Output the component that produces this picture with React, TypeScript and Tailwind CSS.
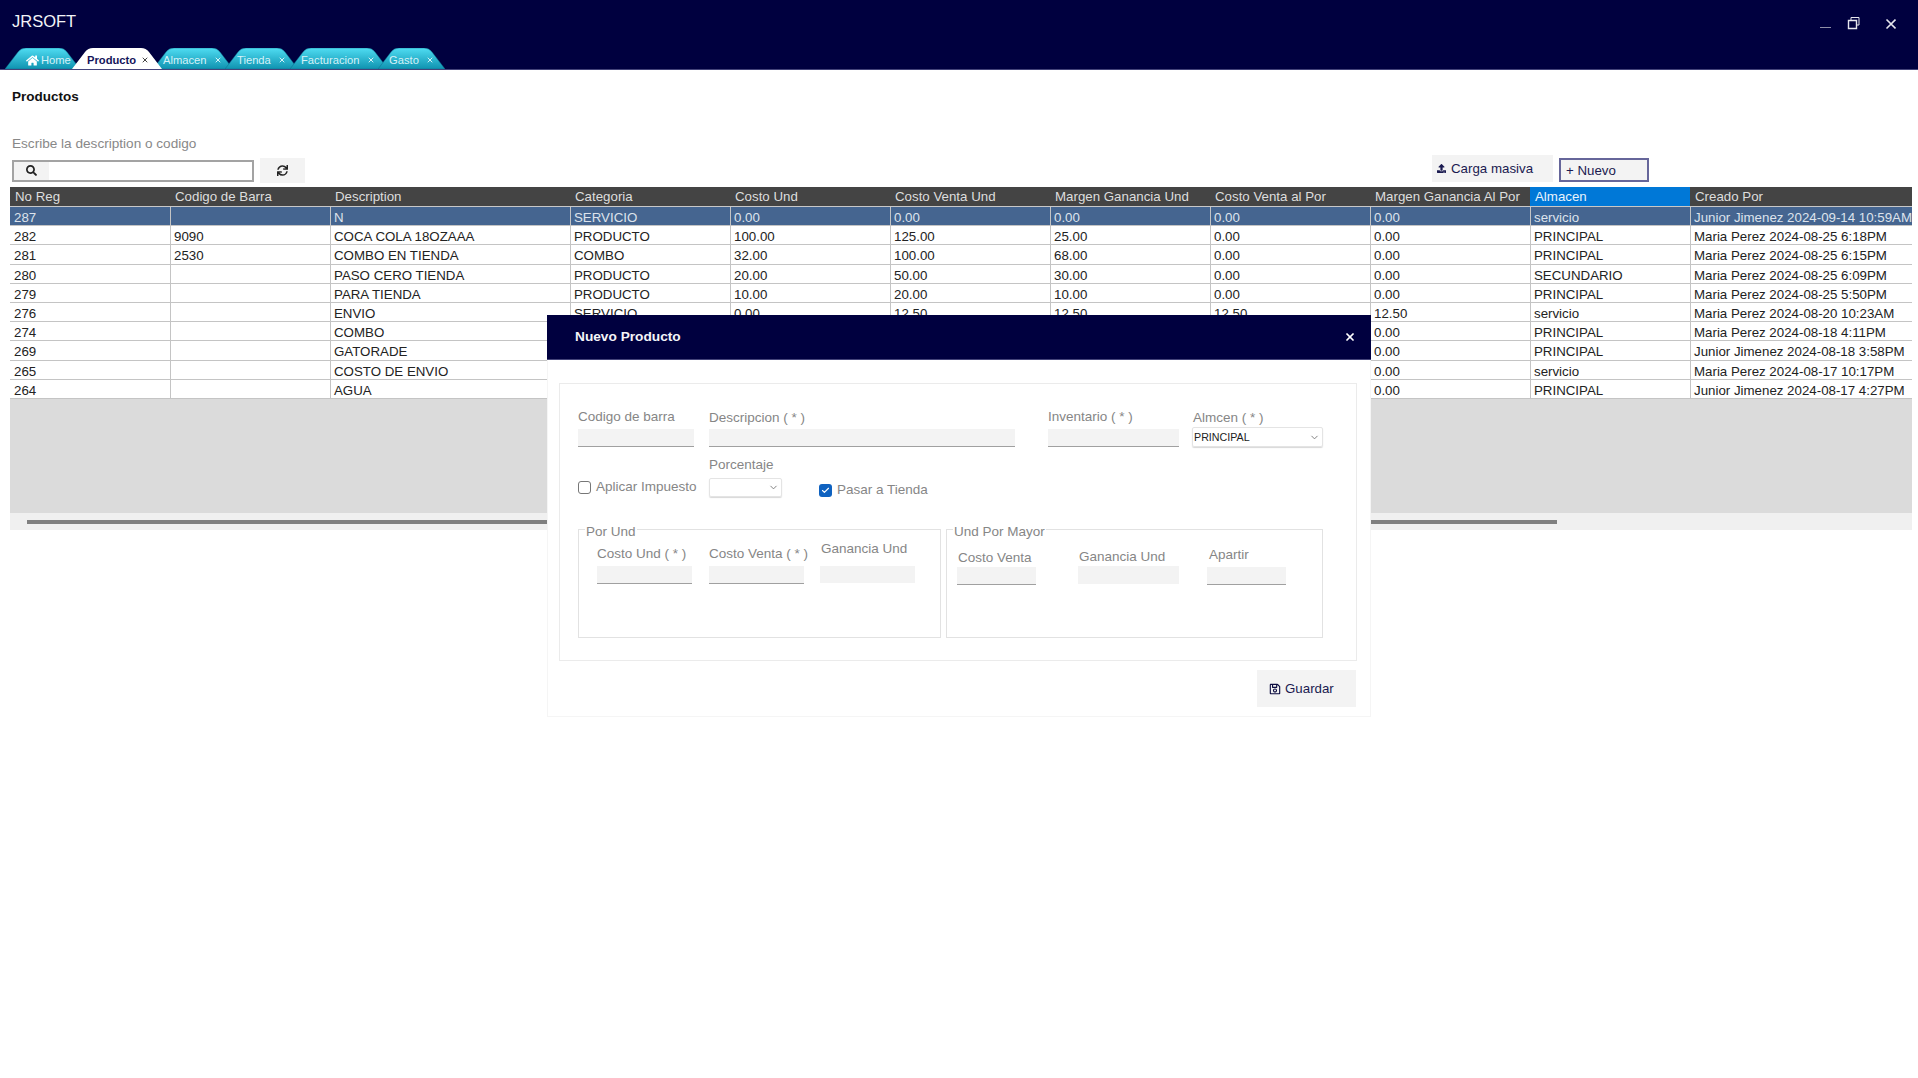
import { useId } from 'react'
import { ChevronDown, Check, X } from 'lucide-react'
import { FaHome, FaRegSave, FaSearch, FaSync, FaUpload } from 'react-icons/fa'

const tabs = [
  { name: 'Home', w: 75, ml: 'ml-[5px]', pl: 'pl-[21px]', gap: '', active: false },
  { name: 'Producto', w: 90, ml: '-ml-[8px]', pl: 'pl-[15px]', gap: 'ml-[5px]', active: true },
  { name: 'Almacen', w: 80, ml: '-ml-[9px]', pl: 'pl-[10px]', gap: 'ml-[7px]', active: false },
  { name: 'Tienda', w: 73, ml: '-ml-[8px]', pl: 'pl-[12px]', gap: 'ml-[7px]', active: false },
  { name: 'Facturacion', w: 98, ml: '-ml-[8px]', pl: 'pl-[11px]', gap: 'ml-[8px]', active: false },
  { name: 'Gasto', w: 67, ml: '-ml-[10px]', pl: 'pl-[11px]', gap: 'ml-[7px]', active: false },
]

const columns = [
  'No Reg',
  'Codigo de Barra',
  'Description',
  'Categoria',
  'Costo Und',
  'Costo Venta Und',
  'Margen Ganancia Und',
  'Costo Venta al Por',
  'Margen Ganancia Al Por',
  'Almacen',
  'Creado Por',
]

const rows = [
  ['287', '', 'N', 'SERVICIO', '0.00', '0.00', '0.00', '0.00', '0.00', 'servicio', 'Junior Jimenez 2024-09-14 10:59AM'],
  ['282', '9090', 'COCA COLA 18OZAAA', 'PRODUCTO', '100.00', '125.00', '25.00', '0.00', '0.00', 'PRINCIPAL', 'Maria Perez 2024-08-25 6:18PM'],
  ['281', '2530', 'COMBO EN TIENDA', 'COMBO', '32.00', '100.00', '68.00', '0.00', '0.00', 'PRINCIPAL', 'Maria Perez 2024-08-25 6:15PM'],
  ['280', '', 'PASO CERO TIENDA', 'PRODUCTO', '20.00', '50.00', '30.00', '0.00', '0.00', 'SECUNDARIO', 'Maria Perez 2024-08-25 6:09PM'],
  ['279', '', 'PARA TIENDA', 'PRODUCTO', '10.00', '20.00', '10.00', '0.00', '0.00', 'PRINCIPAL', 'Maria Perez 2024-08-25 5:50PM'],
  ['276', '', 'ENVIO', 'SERVICIO', '0.00', '12.50', '12.50', '12.50', '12.50', 'servicio', 'Maria Perez 2024-08-20 10:23AM'],
  ['274', '', 'COMBO', '', '', '', '', '', '0.00', 'PRINCIPAL', 'Maria Perez 2024-08-18 4:11PM'],
  ['269', '', 'GATORADE', '', '', '', '', '', '0.00', 'PRINCIPAL', 'Junior Jimenez 2024-08-18 3:58PM'],
  ['265', '', 'COSTO DE ENVIO', '', '', '', '', '', '0.00', 'servicio', 'Maria Perez 2024-08-17 10:17PM'],
  ['264', '', 'AGUA', '', '', '', '', '', '0.00', 'PRINCIPAL', 'Junior Jimenez 2024-08-17 4:27PM'],
]

const gridCols = 'grid grid-cols-[160px_160px_240px_160px_160px_160px_160px_160px_160px_160px_222px]'
const labelText = 'h-4 text-[13.5px] leading-4 text-[#868686] whitespace-nowrap'
const inputLine = 'bg-[#f3f3f3] border-b border-[#a0a0a0]'

function Tab({ tab }: { tab: (typeof tabs)[number] }) {
  const id = useId()
  const w = tab.w
  const d = `M0 21 L13 4 Q16 0 21 0 L${w - 21} 0 Q${w - 16} 0 ${w - 13} 4 L${w} 21 Z`
  return (
    <div
      className={`relative h-[21px] shrink-0 ${tab.ml} ${tab.pl} ${tab.active ? 'z-10' : ''}`}
      style={{ width: w }}
    >
      <svg className="absolute inset-0" width={w} height={21}>
        <defs>
          <linearGradient id={id} x1="0" y1="0" x2="0" y2="1">
            <stop offset="0" stopColor="#4fdcf2" />
            <stop offset="1" stopColor="#0f93b0" />
          </linearGradient>
        </defs>
        <path d={d} fill={tab.active ? '#ffffff' : `url(#${id})`} stroke={tab.active ? 'none' : '#0d6f8c'} strokeWidth="0.5" />
      </svg>
      <div className="relative flex items-center h-[24px] text-[11.2px]">
        {tab.name === 'Home' && <FaHome className="w-[13px] h-[13px] text-white mr-[2px]" />}
        <span className={tab.active ? 'font-bold text-[#14145a]' : 'text-[#d5f2f8]'}>{tab.name}</span>
        {tab.name !== 'Home' && (
          <X className={`w-[8px] h-[8px] ${tab.gap} ${tab.active ? 'text-[#444]' : 'text-[#d5f2f8]'}`} strokeWidth={3} />
        )}
      </div>
    </div>
  )
}

function Field({
  label,
  box,
  labelBox = '',
}: {
  label: string
  box: string
  labelBox?: string
}) {
  return (
    <div className="shrink-0">
      <div className={`${labelText} ${labelBox}`}>{label}</div>
      <div className={box} />
    </div>
  )
}

function Fieldset({ legend, width, children }: { legend: string; width: string; children: React.ReactNode }) {
  return (
    <div className={`relative h-[109px] border border-[#e2e2e2] flex items-start ${width}`}>
      <span className="absolute -top-[6px] left-[6px] px-[1px] bg-white text-[13.5px] leading-4 text-[#868686]">{legend}</span>
      {children}
    </div>
  )
}

function Modal() {
  return (
    <div className="absolute left-[547px] top-[315px] w-[824px] h-[402px] bg-white border border-[#f5f5f5] flex flex-col">
      <div className="h-[45px] -mx-px -mt-px shrink-0 bg-[#00003f] border-b border-[#44447a] pl-[28px] pr-[15px] flex items-center justify-between">
        <span className="text-[13.7px] font-bold text-[#f4f4f8]">Nuevo Producto</span>
        <X className="w-[12px] h-[12px] text-white" strokeWidth={3.5} />
      </div>

      <div className="mt-[23px] ml-[11px] w-[798px] h-[278px] shrink-0 border border-[#ebebeb] pl-[18px]">
        <div className="flex items-end h-[63px]">
          <Field label="Codigo de barra" box={`w-[116px] h-[18px] mt-[4px] ${inputLine}`} />
          <div className="ml-[15px]">
            <Field label="Descripcion ( * )" box={`w-[306px] h-[18px] mt-[3px] ${inputLine}`} />
          </div>
          <div className="ml-[33px]">
            <Field label="Inventario ( * )" box={`w-[131px] h-[18px] mt-[4px] ${inputLine}`} />
          </div>
          <div className="ml-[13px]">
            <div className={`${labelText} ml-[1px]`}>Almcen ( * )</div>
            <div className="mt-[1px] w-[131px] h-[20px] border border-[#e4e4e4] rounded-[2px] shadow-[0_1px_1px_#d8d8d8] flex items-center justify-between pl-[1px] pr-[2px] text-[10.7px] text-[#222]">
              PRINCIPAL
              <ChevronDown className="w-[11px] h-[11px] text-[#777]" />
            </div>
          </div>
        </div>

        <div className="flex items-start h-[82px]">
          <div className="w-[131px] mt-[30px] flex items-center gap-[5px] text-[13.5px] text-[#868686]">
            <span className="w-[13px] h-[13px] border border-[#777] rounded-[3px] bg-white" />
            Aplicar Impuesto
          </div>
          <div className="w-[110px] mt-[10px]">
            <div className={labelText}>Porcentaje</div>
            <div className="mt-[5px] w-[73px] h-[19px] border border-[#e4e4e4] rounded-[2px] shadow-[0_1px_1px_#d8d8d8] flex items-center justify-end pr-[2px]">
              <ChevronDown className="w-[11px] h-[11px] text-[#777]" />
            </div>
          </div>
          <div className="mt-[33px] flex items-center gap-[5px] text-[13.5px] text-[#868686]">
            <span className="w-[13px] h-[13px] rounded-[3px] bg-[#0f62c0] flex items-center justify-center">
              <Check className="w-[9px] h-[9px] text-white" strokeWidth={3} />
            </span>
            Pasar a Tienda
          </div>
        </div>

        <div className="flex gap-[5px]">
          <Fieldset legend="Por Und" width="w-[363px]">
            <div className="ml-[18px] mt-[16px]">
              <Field label="Costo Und ( * )" box={`w-[95px] h-[18px] mt-[4px] ${inputLine}`} />
            </div>
            <div className="ml-[17px] mt-[16px]">
              <Field label="Costo Venta ( * )" box={`w-[95px] h-[18px] mt-[4px] ${inputLine}`} />
            </div>
            <div className="ml-[12px] mt-[11px]">
              <Field label="Ganancia Und" labelBox="ml-px" box="w-[95px] h-[17px] mt-[9px] bg-[#f3f3f3]" />
            </div>
          </Fieldset>
          <Fieldset legend="Und Por Mayor" width="w-[377px]">
            <div className="ml-[10px] mt-[20px]">
              <Field label="Costo Venta" labelBox="ml-px" box={`w-[79px] h-[18px] mt-[1px] ${inputLine}`} />
            </div>
            <div className="ml-[42px] mt-[19px]">
              <Field label="Ganancia Und" labelBox="ml-px" box="w-[101px] h-[18px] mt-[1px] bg-[#f3f3f3]" />
            </div>
            <div className="ml-[28px] mt-[17px]">
              <Field label="Apartir" labelBox="ml-[2px]" box={`w-[79px] h-[18px] mt-[4px] ${inputLine}`} />
            </div>
          </Fieldset>
        </div>
      </div>

      <div className="mt-[9px] mr-[14px] self-end w-[99px] h-[37px] bg-[#f3f3f3] flex items-center pl-[12px] gap-[4px] text-[13.3px] text-[#1a1a50]">
        <FaRegSave className="w-[12px] h-[12px] text-[#0d0d40]" />
        Guardar
      </div>
    </div>
  )
}

export default function App() {
  return (
    <div className="relative w-full h-[1078px] overflow-hidden bg-white font-['Liberation_Sans',Arial,sans-serif]">
      <header className="h-[70px] bg-[#00003f] border-b border-[#44447a] flex flex-col">
        <div className="flex justify-between pt-[13px] h-[48px] pl-[12px] pr-[22px]">
          <span className="text-[16.5px] leading-4 text-[#f2f4f8]">JRSOFT</span>
          <svg width="76" height="14" viewBox="0 0 76 14" className="mt-[3px]" fill="none" stroke="#e6e6ee" strokeWidth="1">
            <path d="M0 11.5H11" stroke="#8f8fa8" />
            <path d="M28.5 4.5h8v8h-8z" strokeWidth="1.4" />
            <path d="M31 4V1.5h8V9h-2.5" />
            <path d="M66.5 3.5l9 9M75.5 3.5l-9 9" strokeWidth="1.6" />
          </svg>
        </div>
        <div className="flex h-[21px]">
          {tabs.map((t) => (
            <Tab key={t.name} tab={t} />
          ))}
        </div>
      </header>

      <main className="pl-[10px] pr-[6px]">
        <h1 className="pt-[19px] pl-[2px] text-[13.5px] leading-4 font-bold text-[#111]">Productos</h1>
        <p className="mt-[31px] pl-[2px] text-[13.6px] leading-4 text-[#888]">Escribe la description o codigo</p>

        <div className="mt-[3px] h-[28px] flex items-start">
          <div className="mt-[5px] ml-[2px] w-[242px] h-[22px] border-2 border-[#a3a3a3] flex">
            <div className="w-[35px] pb-[2px] bg-[#f3f3f3] flex items-center justify-center">
              <FaSearch className="w-[11px] h-[11px] text-[#222]" />
            </div>
          </div>
          <div className="mt-[3px] ml-[6px] w-[45px] h-[25px] pb-[1px] bg-[#f3f3f3] flex items-center justify-center">
            <FaSync className="w-[11px] h-[11px] text-[#222]" />
          </div>
          <div className="ml-auto w-[121px] h-[27px] bg-[#f3f3f3] flex items-center pl-[5px] gap-[5px] text-[13.3px] text-[#1a1a50]">
            <FaUpload className="w-[9px] h-[9px] text-[#1a1a50]" />
            Carga masiva
          </div>
          <div className="mt-[3px] ml-[6px] mr-[263px] w-[90px] h-[24px] pt-[2px] border-2 border-[#66669a] bg-[#f3f3f3] flex items-center pl-[5px] text-[13.3px] text-[#1a1a50]">
            + Nuevo
          </div>
        </div>

        <div className="mt-[4px] text-[13.3px]">
          <div className={`${gridCols} h-[20px] bg-[#444444] border-b border-[#c8c8c8] text-[#dedede]`}>
            {columns.map((c) => (
              <div
                key={c}
                className={`pl-[5px] leading-[20px] whitespace-nowrap overflow-hidden ${
                  c === 'Almacen' ? 'bg-[#0078d7] text-[#e8f3fc]' : ''
                }`}
              >
                {c}
              </div>
            ))}
          </div>
          {rows.map((row, i) => (
            <div
              key={row[0]}
              className={`${gridCols} h-[19.2px] border-b border-[#c4c4c4] ${
                i === 0 ? 'bg-[#456590] text-[#dde3ec]' : 'bg-white text-[#222]'
              }`}
            >
              {row.map((cell, j) => (
                <div
                  key={j}
                  className={`leading-[21px] whitespace-nowrap overflow-hidden ${
                    j > 0 ? 'pl-[3px] border-l border-[#c4c4c4]' : 'pl-[4px]'
                  }`}
                >
                  {cell}
                </div>
              ))}
            </div>
          ))}
          <div className="h-[114px] bg-[#dbdbdb]" />
          <div className="h-[17px] bg-[#f0f0f0] pt-[7px] pl-[17px]">
            <div className="w-[1530px] h-[4px] bg-[#808080]" />
          </div>
        </div>
      </main>

      <Modal />
    </div>
  )
}
